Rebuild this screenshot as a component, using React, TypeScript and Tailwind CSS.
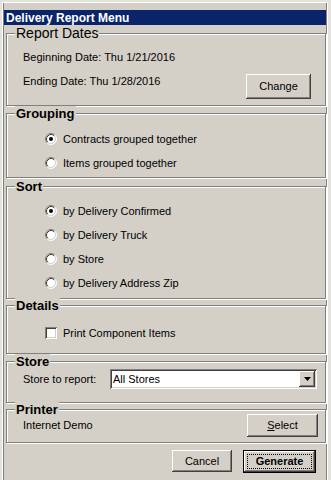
import React from "react";

const font = { fontFamily: '"Liberation Sans", Arial, sans-serif' };

function Radio({ checked }: { checked?: boolean }) {
  return (
    <svg width="12" height="12" viewBox="0 0 12 12" className="shrink-0">
      <circle cx="6" cy="6" r="5" fill="#ffffff" />
      <path d="M2.11 9.89A5.5 5.5 0 0 1 9.89 2.11" fill="none" stroke="#808080" />
      <path d="M9.89 2.11A5.5 5.5 0 0 1 2.11 9.89" fill="none" stroke="#ffffff" />
      <path d="M2.82 9.18A4.5 4.5 0 0 1 9.18 2.82" fill="none" stroke="#404040" />
      <path d="M9.18 2.82A4.5 4.5 0 0 1 2.82 9.18" fill="none" stroke="#d4d0c8" />
      {checked && <circle cx="6" cy="6" r="2" fill="#000000" />}
    </svg>
  );
}

function RadioRow({ label, checked }: { label: string; checked?: boolean }) {
  return (
    <div className="flex h-[16px] items-center gap-[6px]">
      <Radio checked={checked} />
      <span>{label}</span>
    </div>
  );
}

// classic raised win button
function Btn({ children, className = "" }: { children: React.ReactNode; className?: string }) {
  return (
    <div
      className={
        "flex items-center justify-center bg-[#d4d0c8] shadow-[inset_-1px_-1px_#404040,inset_1px_1px_#ffffff,inset_-2px_-2px_#808080] " +
        className
      }
    >
      {children}
    </div>
  );
}

function Group({
  title,
  big,
  className = "",
  children,
}: {
  title: string;
  big?: boolean;
  className?: string;
  children?: React.ReactNode;
}) {
  return (
    <div
      className={
        "relative ml-[2px] w-[320px] border border-[#808080] shadow-[inset_1px_1px_#ffffff,1px_1px_#ffffff] " + className
      }
    >
      <span
        className={
          "absolute left-[8px] top-[-8px] bg-[#d4d0c8] pl-[1px] pr-[1px] leading-[15px] text-black " +
          (big ? "text-[14px]" : "text-[13px] font-bold")
        }
      >
        {title}
      </span>
      {children}
    </div>
  );
}

export default function App() {
  return (
    <div className="h-[480px] w-[331px] overflow-hidden bg-[#e4e2dc] pt-[2px] text-[11px] text-black" style={font}>
      <div className="ml-[2px] h-[478px] w-[326px] border-l border-t border-r border-[#ffffff] shadow-[inset_1px_0_#808080,inset_-1px_0_#808080] bg-[#d4d0c8] pt-[7px] pl-[1px]">
        {/* title bar */}
        <div className="flex h-[15px] w-[322px] items-center bg-[#0a246a] pl-[2px] text-[12px] font-bold text-white">
          Delivery Report Menu
        </div>

        {/* Report Dates */}
        <Group title="Report Dates" big className="mt-[8px] h-[73px] pl-[16px] pt-[15px]">
          <div className="flex h-[16px] items-center">Beginning Date: Thu 1/21/2016</div>
          <div className="mt-[8px] flex items-start justify-between pr-[14px]">
            <div className="flex h-[16px] items-center">Ending Date: Thu 1/28/2016</div>
            <Btn className="mt-[1px] h-[25px] w-[65px]">Change</Btn>
          </div>
        </Group>

        {/* Grouping */}
        <Group title="Grouping" className="mt-[7px] h-[65px] pl-[38px] pt-[17px]">
          <div className="flex flex-col gap-[8px]">
            <RadioRow label="Contracts grouped together" checked />
            <RadioRow label="Items grouped together" />
          </div>
        </Group>

        {/* Sort */}
        <Group title="Sort" className="mt-[8px] h-[113px] pl-[38px] pt-[16px]">
          <div className="flex flex-col gap-[8px]">
            <RadioRow label="by Delivery Confirmed" checked />
            <RadioRow label="by Delivery Truck" />
            <RadioRow label="by Store" />
            <RadioRow label="by Delivery Address Zip" />
          </div>
        </Group>

        {/* Details */}
        <Group title="Details" className="mt-[6px] h-[49px] pl-[38px] pt-[19px]">
          <div className="flex h-[16px] items-center gap-[6px]">
            <div className="h-[12px] w-[12px] bg-white shadow-[inset_1px_1px_#808080,inset_-1px_-1px_#ffffff,inset_2px_2px_#404040,inset_-2px_-2px_#d4d0c8]" />
            <span>Print Component Items</span>
          </div>
        </Group>

        {/* Store */}
        <Group title="Store" className="mt-[7px] h-[42px] pl-[16px] pr-[8px] pt-[7px]">
          <div className="flex h-[20px] items-center justify-between">
            <span>Store to report:</span>
            <div className="flex h-[20px] w-[207px] items-center bg-white shadow-[inset_1px_1px_#808080,inset_-1px_-1px_#ffffff,inset_2px_2px_#404040,inset_-2px_-2px_#d4d0c8] pl-[3px] pr-[2px] py-[2px]">
              <span className="flex-1">All Stores</span>
              <Btn className="h-[16px] w-[16px]">
                <svg width="7" height="4" viewBox="0 0 7 4">
                  <path d="M0 0h7L3.5 4z" fill="#000" />
                </svg>
              </Btn>
            </div>
          </div>
        </Group>

        {/* Printer */}
        <Group title="Printer" className="mt-[6px] h-[34px] pl-[16px] pr-[7px] pt-[4px]">
          <div className="flex items-start justify-between">
            <div className="flex h-[16px] items-center pt-[6px]">Internet Demo</div>
            <Btn className="h-[23px] w-[71px]">
              <span>
                <span className="underline">S</span>elect
              </span>
            </Btn>
          </div>
        </Group>

        {/* bottom buttons */}
        <div className="mt-[7px] flex w-[322px] items-start justify-end gap-[11px] pr-[10px]">
          <Btn className="h-[22px] w-[60px]">Cancel</Btn>
          <div className="h-[23px] w-[73px] border border-black">
            <Btn className="h-full w-full p-[3px]">
              <div className="flex h-full w-full items-center justify-center border border-dotted border-black font-bold">
                Generate
              </div>
            </Btn>
          </div>
        </div>
      </div>
    </div>
  );
}
